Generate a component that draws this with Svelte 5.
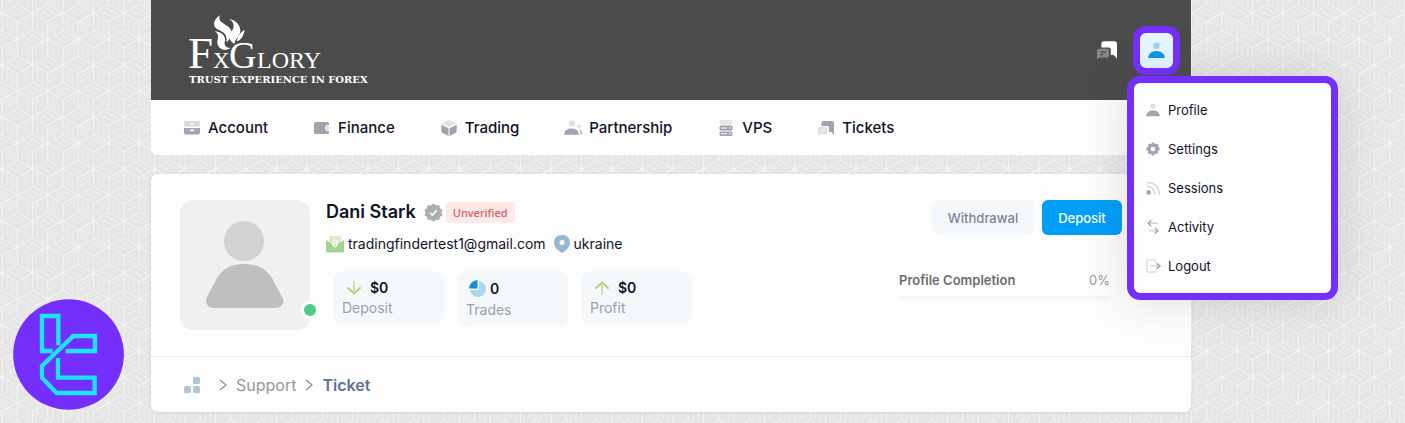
<script>
  const nav = [
    { icon: 'drawer', label: 'Account' },
    { icon: 'wallet', label: 'Finance' },
    { icon: 'cube', label: 'Trading' },
    { icon: 'group', label: 'Partnership' },
    { icon: 'server', label: 'VPS' },
    { icon: 'chat', label: 'Tickets' }
  ];
  const menu = [
    { icon: 'user', label: 'Profile' },
    { icon: 'gear', label: 'Settings' },
    { icon: 'feed', label: 'Sessions' },
    { icon: 'swap', label: 'Activity' },
    { icon: 'exit', label: 'Logout' }
  ];
  const stats = [
    { icon: 'down', value: '$0', label: 'Deposit' },
    { icon: 'pie', value: '0', label: 'Trades' },
    { icon: 'up', value: '$0', label: 'Profit' }
  ];
</script>

{#snippet glyph(name)}
  <svg class="glyph {name}" viewBox="0 0 16 16" aria-hidden="true">
    {#if name === 'drawer'}
      <path opacity=".4" d="M1 1h14q1 0 1 1v4.500H0V2q0-1 1-1zM6 3v1.500h4V3z" fill-rule="evenodd" />
      <path d="M0 8h16v5q0 1.500-1.500 1.500h-13Q0 14.500 0 13zM5.500 9.500q0 2 2.500 2t2.500-2z" fill-rule="evenodd" />
    {:else if name === 'wallet'}
      <path d="M1.500 2h12q1.500 0 1.500 1.500V5h-1q-3 0-3 3t3 3h1v1.500q0 1.500-1.500 1.500h-12Q0 14 0 12.500v-9Q0 2 1.500 2z" />
      <path opacity=".3" d="M13.500 6H15v4h-1.500a2 2 0 0 1 0-4z" />
    {:else if name === 'cube'}
      <path opacity=".3" d="M8 0l7 3.500-7 3.500-7-3.500z" />
      <path d="M.3 4.800L7.500 8.300V16L1.500 13Q.3 12.400.3 11zM15.700 4.800L8.500 8.300V16l6-3q1.200-.6 1.200-2z" />
    {:else if name === 'group'}
      <circle cx="7" cy="3.500" r="3" opacity=".3" /><circle cx="14" cy="6.500" r="2" opacity=".3" />
      <path d="M-1 14q1-5.500 7.500-5.500T14 14q0 .8-1 .8H0Q-1 14.800-1 14zM14 9.500q3 .3 3 4.500l-1.200.8q0-3.500-1.800-5.300z" />
    {:else if name === 'server'}
      <rect x="1.500" y="0" width="13" height="4.500" rx="1.500" opacity=".25" />
      <path fill-rule="evenodd" d="M3 5.500h10q1.500 0 1.500 1.500v2q0 1.500-1.500 1.500H3Q1.500 10.500 1.500 9V7q0-1.500 1.500-1.500zm0 2v1h6v-1zm8 0v1h2v-1zM3 11.500h10q1.500 0 1.500 1.500v1.500Q14.500 16 13 16H3q-1.500 0-1.500-1.500V13q0-1.500 1.500-1.500zm0 1.800v1h6v-1zm8 0v1h2v-1z" />
    {:else if name === 'chat'}
      <path d="M5.500 1H14q2 0 2 2v12l-2.500-3H11V7.500Q11 6 9.500 6H3.500V3q0-2 2-2z" />
      <path opacity=".35" fill-rule="evenodd" d="M1.500 7H8q1.500 0 1.500 1.500v4Q9.500 14 8 14H2l-2 1.500v-7Q0 7 1.500 7zm1 2.200v.9h5v-.9zm0 2v.9H5v-.9z" />
    {:else if name === 'user'}
      <circle cx="8" cy="3.500" r="3" opacity=".35" />
      <path d="M0 15Q1 8.500 8 8.500t8 6.500z" />
    {:else if name === 'gear'}
      <path fill-rule="evenodd" d="M6.500 1l1.500-.8L9.500 1l.5 1.400 3-.4 1 1 .1 2.600 1.400 1L15.800 8l-.8 1.500-1.500.7.300 2.300-1.300 1.300-2.500-.3-.7 1.700-1.300.6-1.400-.6-.7-1.700-2.400.3-1.300-1.300.3-2.300-1.700-.7L.2 8l.6-1.500 1.700-.7-.3-2.500L3.500 2l2.500.4zM8 5.300a2.700 2.700 0 1 0 0 5.400 2.700 2.700 0 0 0 0-5.400z" />
    {:else if name === 'feed'}
      <circle cx="3" cy="13" r="2.600" />
      <path class="line" opacity=".4" d="M1 6q8 0 9 9.500M1 1.500Q14 2 15.500 15.500" />
    {:else if name === 'swap'}
      <path class="line" opacity=".4" d="M3 3.700h10.500M3 12.300h10" />
      <path class="line" d="M6 .5L2.500 3.700 6 7M10 9l3.500 3.300L10 15.500" />
    {:else if name === 'exit'}
      <path class="line" opacity=".35" d="M11 4V2.500Q11 1 9.500 1h-7Q1 1 1 2.500v11Q1 15 2.500 15h7q1.500 0 1.500-1.500V12M4.500 8H15" />
      <path class="line" d="M12 5l4 3-4 3" />
    {/if}
  </svg>
{/snippet}

<div class="page">
  <div class="container">
    <header>
      <a class="brand" href="#home" aria-label="FxGlory home">
        <svg viewBox="0 0 184 76">
          <g fill="#fff">
            <g font-family="Liberation Serif, serif">
              <text x="-1" y="56" font-size="45">F</text>
              <text x="24" y="56" font-size="23">X</text>
              <text x="40" y="56" font-size="38">G</text>
              <text x="68" y="56" font-size="24">LORY</text>
            </g>
            <text x="0" y="71" font-family="DejaVu Serif, serif" font-weight="bold" font-size="10">TRUST EXPERIENCE IN FOREX</text>
            <g transform="translate(-9 -6) scale(.3333)">
              <path d="M119 28C98 43 98 62 112 70c20 8 31 17 27 39 18-15 23-31 7-46C132 52 113 48 119 28z" />
              <path d="M147 39c17 10 17 25 8 37-9 13-9 28 8 38 2-16 17-22 18-40 0-20-17-32-34-35z" />
              <path d="M104 76c16 10 9 21 8 32 0 21 22 30 40 18-15-1-21-9-17-22 2-15-11-27-31-28z" />
              <path d="M194 71c-14 9-23 22-23 35 13-5 20-17 23-35z" />
            </g>
          </g>
        </svg>
      </a>
      <div class="tools">
        <button class="messages" aria-label="Messages">{@render glyph('chat')}</button>
        <div class="account">
          <button class="avatar-btn" aria-label="Account menu" aria-expanded="true">{@render glyph('user')}</button>
          <ul class="dropdown">
            {#each menu as item}
              <li><a href="#{item.label}">{@render glyph(item.icon)}{item.label}</a></li>
            {/each}
          </ul>
        </div>
      </div>
    </header>

    <nav class="main-nav">
      {#each nav as item}
        <a href="#{item.label}">{@render glyph(item.icon)}{item.label}</a>
      {/each}
    </nav>

    <main class="card">
      <section class="profile">
        <div class="photo">
          <svg viewBox="0 0 130 130" aria-hidden="true">
            <circle cx="64" cy="41" r="20" fill="#d2d2d2" />
            <path d="M64 64c14 0 22 5 28 14l10 19c4 7-1 11-8 11H35c-7 0-11-5-8-11l10-19c6-9 13-14 27-14z" fill="#bfbfbf" />
          </svg>
          <span class="online"></span>
        </div>

        <div class="details">
          <div class="name-row">
            <h1>Dani Stark</h1>
            <svg class="verified" viewBox="0 0 20 20" aria-hidden="true">
              <path d="M10 .5l2.700 2 3.300-.3.800 3.200 2.700 2L18.300 10l1.200 3-2.700 1.800-.8 3.100-3.300-.2L10 19.600l-2.700-1.900-3.300.2-.8-3.100L.5 13l1.200-3L.5 7.400l2.700-2L4 2.200l3.300.3z" fill="#adadad" />
              <path d="M6.500 10.300l2.400 2.400 4.600-5" fill="none" stroke="#fff" stroke-width="1.600" />
            </svg>
            <span class="tag">Unverified</span>
          </div>
          <div class="contact">
            <svg class="mail" viewBox="0 0 18 18" aria-hidden="true">
              <path d="M3 1h12v10H3z" fill="#dceacd" />
              <path d="M0 5l6 4v2h6V9l6-4v11q0 1.500-1.500 1.500h-15Q0 17.500 0 16z" fill="#a3d295" />
              <path d="M7 5h4v5q0 2-2 2t-2-2V8h2" fill="none" stroke="#fff" />
            </svg>
            <span>tradingfindertest1@gmail.com</span>
            <svg class="pin" viewBox="0 0 16 18" aria-hidden="true">
              <path fill-rule="evenodd" d="M8 0c5 0 8 3.500 8 7.500 0 4.500-4 8-8 10.500-4-2.500-8-6-8-10.500C0 3.500 3 0 8 0zm0 5a2.500 2.500 0 1 0 0 5 2.500 2.500 0 0 0 0-5z" fill="#93b9d2" />
            </svg>
            <span>ukraine</span>
          </div>
          <div class="stats">
            {#each stats as s}
              <div class="stat" class:tall={s.icon === 'pie'}>
                <div class="value">
                  <svg viewBox="0 0 18 18" aria-hidden="true">
                    {#if s.icon === 'pie'}
                      <path d="M10 1a8 8 0 1 1-9 9h9z" fill="#a9d8e9" />
                      <path d="M8.500 0v8.500H0Q.5 1 8.500 0z" fill="#1593c8" />
                    {:else}
                      <g fill="none" stroke="#b5cf7c" stroke-width="2" stroke-linecap="round" transform={s.icon === 'up' ? 'rotate(180 9 9)' : undefined}>
                        <path opacity=".55" d="M9 3v11" /><path d="M3 9l6 5.500L15 9" />
                      </g>
                    {/if}
                  </svg>
                  <strong>{s.value}</strong>
                </div>
                <span>{s.label}</span>
              </div>
            {/each}
          </div>
        </div>

        <div class="side">
          <div class="actions">
            <button class="light">Withdrawal</button>
            <button class="primary">Deposit</button>
          </div>
          <div class="completion">
            <div class="completion-row"><strong>Profile Completion</strong><span>0%</span></div>
            <div class="bar" role="progressbar" aria-label="Profile Completion" aria-valuenow="0"></div>
          </div>
        </div>
      </section>

      <nav class="crumbs" aria-label="Breadcrumb">
        <a href="#dashboard" aria-label="Dashboard">
          <svg class="tiles" viewBox="0 0 16 16" aria-hidden="true">
            <rect x="9" width="7" height="7" rx="1.500" /><rect y="9" width="7" height="7" rx="1.500" /><rect x="9" y="9" width="7" height="7" rx="1.500" />
          </svg>
        </a>
        <svg class="chev" viewBox="0 0 8 12" aria-hidden="true"><path d="M1 1l6 5-6 5" /></svg>
        <a href="#support">Support</a>
        <svg class="chev" viewBox="0 0 8 12" aria-hidden="true"><path d="M1 1l6 5-6 5" /></svg>
        <a class="current" href="#ticket">Ticket</a>
      </nav>
    </main>
  </div>

  <svg class="badge" viewBox="39 27 333 333" aria-hidden="true">
    <circle cx="205.500" cy="193.500" r="166" fill="#752ffd" />
    <g fill="none" stroke="#19e5ff" stroke-width="13">
      <path d="M158 183H126V78h49v88" />
      <path d="M174 204v59h110v46H170l-44-46v-35l94-90h65v45h-88" />
    </g>
  </svg>
</div>

<style>
  :global(body) { margin: 0; }
  .page {
    box-sizing: border-box;
    min-height: 100vh;
    padding: 0 214px 11px 151px;
    background-color: #e6e6e6;
    background-image: url("data:image/svg+xml,%3Csvg xmlns='http://www.w3.org/2000/svg' xmlns:xlink='http://www.w3.org/1999/xlink' viewBox='0 0 61 104'%3E%3Cdefs%3E%3Cg id='a' fill='none' stroke='%23f4f4f4'%3E%3Cpath d='M0 0v17.500M0 0l15.250 8.700M0 0l-15.250 8.700M0 17.500l15.250 8.500M0 17.500l-15.250 8.500M15.250 8.700V26M15.250 8.700L30.500 0'/%3E%3Cpath stroke-width='1.200' stroke='%23eeeeee' d='M5 6v11M10 9v11M-3 6l-9 5M-3 11l-9 5M8 -2l10 5.500M13 -5l10 5.500'/%3E%3C/g%3E%3Cg id='r'%3E%3Cuse xlink:href='%23a' x='-30.500'/%3E%3Cuse xlink:href='%23a'/%3E%3Cuse xlink:href='%23a' x='30.500'/%3E%3Cuse xlink:href='%23a' x='61'/%3E%3C/g%3E%3C/defs%3E%3Cuse xlink:href='%23r'/%3E%3Cuse xlink:href='%23r' x='15.250' y='26'/%3E%3Cuse xlink:href='%23r' y='52'/%3E%3Cuse xlink:href='%23r' x='15.250' y='78'/%3E%3Cuse xlink:href='%23r' x='15.250' y='-26'/%3E%3Cuse xlink:href='%23r' y='104'/%3E%3C/svg%3E");
    background-size: 61px 104px;
    background-position: 2px 13px;
    font: 14px/20px Inter, sans-serif;
    color: #10142a;
  }
  a { color: inherit; text-decoration: none; }
  button { font: inherit; border: 0; padding: 0; cursor: pointer; }
  .glyph { flex: none; width: 16px; height: 16px; fill: #a2a2b1; overflow: visible; }
  .glyph .line { fill: none; stroke: #9b9ba4; stroke-width: 1.5; }
  header {
    display: flex;
    justify-content: space-between;
    align-items: center;
    height: 100px;
    padding: 0 11px 0 38px;
    background: #4b4b4b;
  }
  .brand svg { display: block; width: 184px; height: 76px; }
  .tools { display: flex; align-items: center; gap: 16px; }
  .messages { background: none; display: flex; }
  .messages .glyph { width: 20px; height: 20px; fill: #fff; }
  .account { position: relative; z-index: 2; }
  .avatar-btn {
    box-sizing: border-box;
    display: flex;
    align-items: center;
    justify-content: center;
    width: 47px;
    height: 49px;
    border: 7px solid #752ffd;
    border-radius: 13px;
    background: #e6f6ff;
  }
  .avatar-btn .glyph { width: 17px; height: 17px; fill: #0b98e6; }
  .dropdown {
    position: absolute;
    top: 50px;
    left: -6px;
    box-sizing: border-box;
    width: 211px;
    margin: 0;
    padding: 8px 12px 7px;
    list-style: none;
    border: 7px solid #752ffd;
    border-radius: 13px;
    background: #fdfdfe;
    box-shadow: 0 0 44px rgba(70, 70, 90, 0.18);
  }
  .dropdown a { display: flex; align-items: center; gap: 8px; height: 39px; font-size: 13px; }
  .dropdown .glyph { width: 14px; height: 14px; }
  .main-nav {
    display: flex;
    align-items: center;
    gap: 46px;
    height: 55px;
    padding: 0 33px;
    border-radius: 0 0 7px 7px;
    background: #fdfdfd;
    font-size: 15px;
    font-weight: 500;
  }
  .main-nav a { display: flex; align-items: center; gap: 8px; }
  .card { margin-top: 19px; border-radius: 7px; background: #fdfdfd; box-shadow: 0 1px 4px rgba(0, 0, 0, 0.08); }
  .profile { display: flex; padding: 26px 69px 26px 29px; border-bottom: 1px solid #ececef; }
  .photo { position: relative; flex: none; width: 130px; height: 130px; border-radius: 13px; background: #f0f0f0; }
  .photo svg { display: block; }
  .online {
    position: absolute;
    right: -9px;
    bottom: 11px;
    width: 12px;
    height: 12px;
    border: 3px solid #fdfdfd;
    border-radius: 50%;
    background: #4bc98b;
  }
  .details { flex: 1; height: 130px; margin-left: 16px; }
  .name-row { display: flex; align-items: center; height: 24px; }
  h1 { margin: 0; font-size: 18px; font-weight: 600; }
  .verified { width: 19px; height: 19px; margin: 0 3px 0 8px; }
  .tag { padding: 0 7px; border-radius: 4px; background: #ffe8e8; color: #d2605f; font: 500 11px/21px "Noto Sans", sans-serif; }
  .contact { display: flex; align-items: center; height: 20px; margin-top: 10px; gap: 4px; }
  .mail { width: 18px; height: 18px; }
  .pin { width: 16px; height: 18px; margin-left: 4px; }
  .stats { display: flex; align-items: flex-start; gap: 13px; margin: 17px 0 0 7px; }
  .stat {
    box-sizing: border-box;
    width: 111px;
    padding: 7px 9px;
    border-radius: 9px;
    background: #f5f8fb;
    color: #a0a0a3;
  }
  .value { display: flex; align-items: center; gap: 7px; height: 20px; padding-left: 3px; color: #10142a; }
  .value svg { width: 18px; height: 18px; }
  .value strong { font-weight: 600; font-size: 14px; }
  .tall .value { height: 22px; gap: 3px; }
  .actions { display: flex; justify-content: flex-end; gap: 8px; }
  .actions button { height: 35px; border-radius: 6px; font-size: 13px; font-weight: 500; }
  .light { width: 102px; background: #f5f8fb; color: #7e8299; }
  .primary { width: 80px; background: #009ef7; color: #fff; }
  .completion { margin: 35px 12px 0 0; width: 211px; }
  .completion-row { display: flex; justify-content: space-between; font-size: 13px; color: #98989e; }
  .completion-row strong { font-weight: 600; color: #6f6b70; }
  .bar { height: 5px; margin-top: 6px; border-radius: 3px; background: #f6f7f9; }
  .crumbs { display: flex; align-items: center; gap: 9px; height: 55px; padding: 0 33px; color: #98989b; font-size: 16px; }
  .tiles { display: block; width: 16px; height: 16px; margin-right: 10px; fill: #b5c4d1; }
  .chev { width: 8px; height: 12px; fill: none; stroke: #8f8f92; stroke-width: 1.3; }
  .current { font-weight: 600; color: #5b729d; }
  .badge { position: fixed; left: 13px; bottom: 13px; width: 111px; height: 111px; }
</style>
